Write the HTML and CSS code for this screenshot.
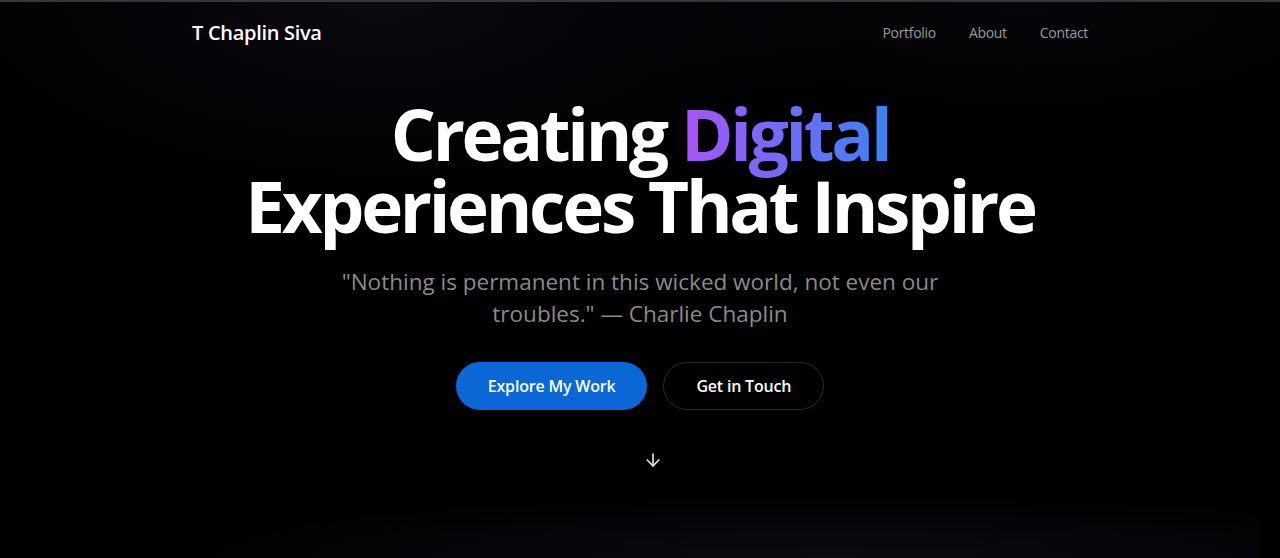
FILE: index.html
```html
<!DOCTYPE html>
<html lang="en">
<head>
<meta charset="utf-8">
<title>T Chaplin Siva</title>
<link rel="stylesheet" href="styles.css">
</head>
<body>
<div class="page">
  <header class="header">
    <div class="container nav">
      <a class="logo" href="#">T Chaplin Siva</a>
      <nav class="links">
        <a href="#">Portfolio</a>
        <a href="#">About</a>
        <a href="#">Contact</a>
      </nav>
    </div>
  </header>
  <main class="hero">
    <h1 class="title"><span class="line">Creating <span class="grad">Digital</span></span><span class="line">Experiences That Inspire</span></h1>
    <p class="quote">"Nothing is permanent in this wicked world, not even our troubles." — Charlie Chaplin</p>
    <div class="actions">
      <a class="btn primary" href="#">Explore My Work</a>
      <a class="btn ghost" href="#">Get in Touch</a>
    </div>
    <div class="scroll">
      <svg width="20" height="20" viewBox="0 0 24 24" fill="none" stroke="currentColor" stroke-width="2" stroke-linecap="round" stroke-linejoin="round"><path d="M12 5v14"/><path d="M19 12l-7 7-7-7"/></svg>
    </div>
  </main>
  <div class="glow"></div>
</div>
</body>
</html>
```

FILE: styles.css
```css
* { box-sizing: border-box; }
html, body { margin: 0; padding: 0; }
body {
  background: #000;
  color: #fff;
  font-family: "Open Sans", "Noto Sans", sans-serif;
  height: 558px;
  overflow: hidden;
}
.page {
  position: relative;
  height: 558px;
  border-top: 2px solid #34373c;
  background:
    radial-gradient(ellipse 700px 300px at 30% 0%, rgba(20,20,35,0.45), transparent 70%),
    radial-gradient(ellipse 600px 200px at 80% 0%, rgba(15,15,25,0.4), transparent 70%),
    #000;
  overflow: hidden;
}
.glow {
  position: absolute;
  left: 190px;
  right: 20px;
  bottom: -40px;
  height: 100px;
  background: radial-gradient(ellipse at 60% 60%, rgba(26,20,36,0.5), rgba(12,10,18,0.3) 55%, transparent 80%);
  pointer-events: none;
}
.container {
  max-width: 896px;
  margin: 0 auto;
}
.header { height: 61px; }
.nav {
  height: 61px;
  display: flex;
  align-items: center;
  justify-content: space-between;
}
.logo {
  color: #fff;
  text-decoration: none;
  font-size: 20px;
  font-weight: 600;
  letter-spacing: -0.3px;
}
.links {
  display: flex;
  gap: 33px;
}
.links a {
  color: #9a9a9a;
  text-decoration: none;
  font-size: 14px;
  letter-spacing: -0.3px;
}
.hero {
  position: relative;
  z-index: 1;
  display: flex;
  flex-direction: column;
  align-items: center;
  text-align: center;
  padding-top: 35px;
}
.title {
  margin: 0;
  font-size: 71px;
  line-height: 72px;
  font-weight: 700;
  letter-spacing: -3.3px;
  display: flex;
  flex-direction: column;
  align-items: center;
}
.line {
  display: block;
  height: 72px;
}
.grad {
  background: linear-gradient(90deg, #a855f7, #3b82f6);
  -webkit-background-clip: text;
  background-clip: text;
  color: transparent;
}
.quote {
  margin: 24px 0 0;
  max-width: 640px;
  font-size: 22.5px;
  line-height: 32px;
  color: #8a8a8a;
  letter-spacing: 0;
}
.actions {
  display: flex;
  gap: 16px;
  margin-top: 32px;
}
.btn {
  height: 48px;
  padding: 0 32px;
  border-radius: 999px;
  display: flex;
  align-items: center;
  font-size: 16px;
  font-weight: 600;
  text-decoration: none;
  color: #fff;
  letter-spacing: -0.2px;
}
.primary { background: #0b66d6; }
.ghost {
  border: 1px solid #2b2b2b;
  background: #000;
}
.scroll {
  margin-top: 40px;
  margin-left: 26px;
  color: #e0e0e0;
  display: flex;
  justify-content: center;
}
```
